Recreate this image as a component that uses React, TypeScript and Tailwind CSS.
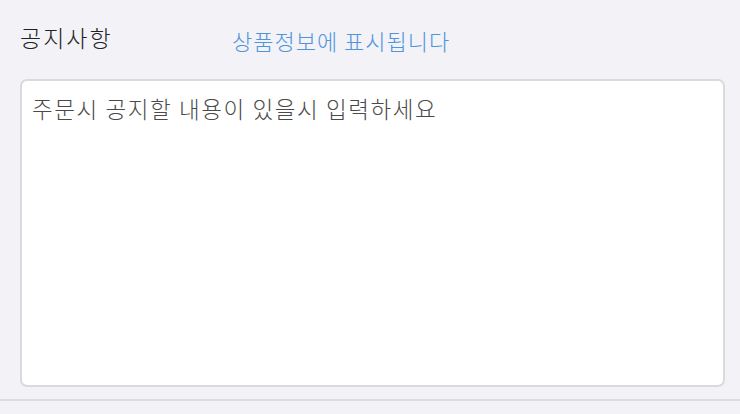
export default function App() {
  return (
    <div
      className="w-[740px] h-[414px] overflow-hidden bg-[#f3f2f7]"
      style={{ fontFamily: '"Noto Sans CJK KR", "Noto Sans", sans-serif' }}
    >
      {/* Header */}
      <div className="flex items-center h-[79px] pl-5 pb-1">
        <h2 className="w-[212px] text-[23px] leading-none font-light text-[#222222] tracking-[2px]">공지사항</h2>
        <span className="text-[22px] leading-none font-light text-[#4f94dc] tracking-[1px] mt-1">상품정보에 표시됩니다</span>
      </div>

      {/* Textbox */}
      <div className="px-5">
        <textarea
          className="block w-[705px] h-[308px] resize-none rounded-[7px] border-2 border-[#dadada] bg-white px-[10px] py-[12px] text-[22.5px] leading-[30px] font-light tracking-[1.6px] text-[#333] placeholder:text-[#4a4a4a] outline-none"
          placeholder="주문시 공지할 내용이 있을시 입력하세요"
        />
      </div>

      {/* Bottom divider */}
      <div className="mt-[12px] border-t-2 border-[#dddddd]" />
    </div>
  )
}
